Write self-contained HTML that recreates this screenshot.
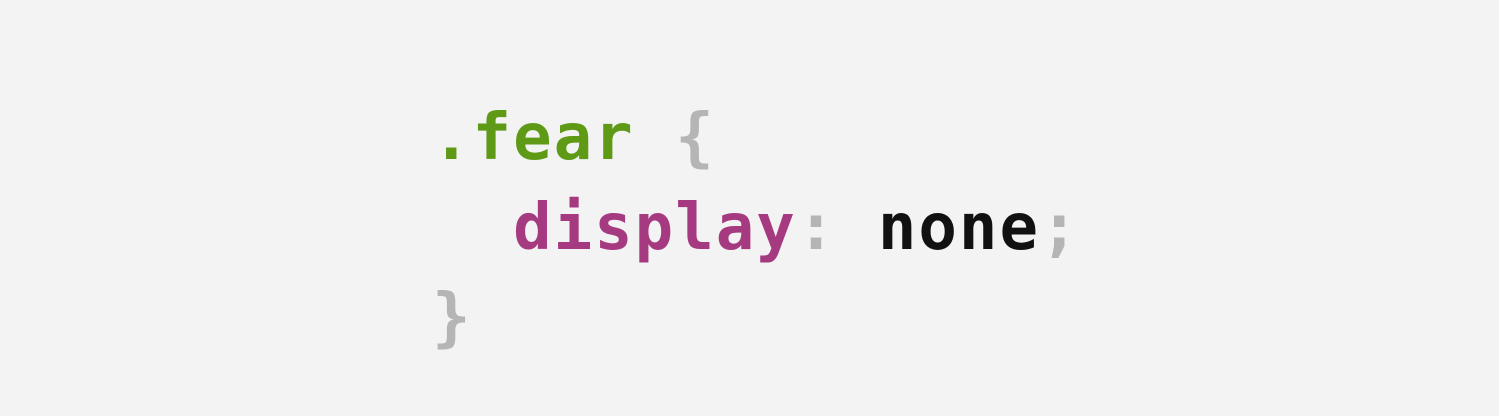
<!DOCTYPE html>
<html><head><style>
html,body{margin:0;padding:0;width:1499px;height:416px;background:#f3f3f3;overflow:hidden}
pre{position:absolute;left:432px;top:93px;margin:0;font-family:"DejaVu Sans Mono","Liberation Mono",monospace;font-weight:bold;font-size:64px;line-height:90px;letter-spacing:2px;color:#111}
.g{color:#5f9a17}.p{color:#a63a80}.s{color:#b5b5b5}
</style></head><body>
<pre><span class="g">.fear</span> <span class="s">{</span>
  <span class="p">display</span><span class="s">:</span> none<span class="s">;</span>
<span class="s">}</span></pre>
</body></html>
